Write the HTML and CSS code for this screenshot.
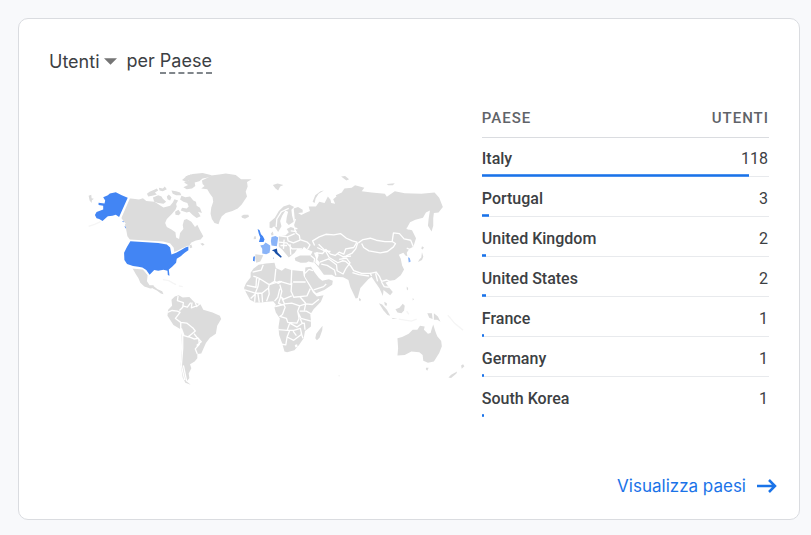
FILE: index.html
```html
<!DOCTYPE html>
<html lang="it">
<head>
<meta charset="utf-8">
<meta name="viewport" content="width=device-width, initial-scale=1">
<title>Utenti per Paese</title>
<link rel="stylesheet" href="styles.css">
</head>
<body>
<main class="card">
  <h2 class="title">
    <button class="metric" type="button">Utenti<svg class="caret" viewBox="0 0 12 6" aria-hidden="true"><path d="M0 0H12L6 6Z"/></svg></button>
    <span>per <span class="dimension">Paese</span></span>
  </h2>
  <div class="content">
    <svg class="map" viewBox="0 0 1170 675" aria-hidden="true">
      <!-- North America -->
      <g class="land">
        <path d="M146 97 160 99 178 101 190 97 200 106 225 108 240 118 252 125 272 120 280 110 285 100 296 104 290 115 292 122 288 132 277 145 262 160 257 172 262 184 276 192 288 200 290 216 299 220 302 202 312 190 310 178 314 163 322 160 336 168 343 178 347 184 354 177 362 194 372 212 364 222 350 225 336 231 328 243 308 249 296 258 281 262 280 250 270 236 250 232 152 224 143 212 139 190 133 170 124 157Z"/>
        <path d="M202 84 210 78 224 72 232 68 236 74 226 80 232 86 218 90 206 92Z"/>
        <path d="M220 95 236 88 246 92 250 99 260 108 252 114 236 112 224 108Z"/>
        <path d="M238 66 250 68 256 62 262 70 250 76 240 74Z"/>
        <path d="M262 92 268 86 276 94 272 104 264 100Z"/>
        <path d="M276 74 290 76 302 80 306 88 290 88 280 84Z"/>
        <path d="M302 101 306 90 318 94 332 92 342 104 350 108 352 120 362 126 368 142 356 138 364 152 352 157 340 148 330 138 322 140 304 134 308 126 322 128 328 122 324 112 312 108Z"/>
        <path d="M287 138 297 132 304 142 298 149 288 147Z"/>
        <path d="M363 235 370 232 376 237 370 241ZM330 240 336 237 339 246 332 248Z"/>
        <path d="M26 90 34 87 35 97 42 99 36 103 35 112 29 104Z"/>
        <path d="M308 42 322 30 334 26 344 30 334 40 320 48Z"/>
        <path d="M158 308 176 309 190 310 204 330 202 348 210 360 222 360 224 368 212 370 194 364 182 352 176 338 168 326Z"/>
        <path d="M222 362 234 372 248 378 252 387 244 385 232 376 220 370Z"/>
      </g>
      <g class="wash"><path d="M250 343 268 346 282 354 290 358M298 362 310 364M26 182 44 176 62 168"/></g>
      <!-- Greenland and the North Atlantic -->
      <g class="land" transform="translate(300)">
        <path d="M18 32 40 24 70 21 98 28 90 34 70 38 60 46 46 50 48 60 38 68 22 70 12 64 26 57 14 50 30 42Z"/>
        <path d="M68 44 88 34 96 29 120 26 140 23 170 27 186 40 218 40 204 48 206 62 200 78 204 92 196 104 188 116 176 128 160 136 140 142 128 152 122 164 118 176 106 172 98 160 94 144 96 126 102 108 100 94 92 84 84 70 66 68 76 60 70 54Z"/>
        <path d="M187 151 194 147 208 147 210 153 198 159 189 156Z"/>
        <path d="M282 57 296 53 314 57 304 62 298 74 290 68Z"/>
        <path d="M225 213 231 212 231 220 224 221Z"/>
        <path d="M229 266 253 269 250 276 244 288 232 292 229 280Z"/>
      </g>
      <!-- Eurasia -->
      <g class="land" transform="translate(480)">
        <path d="M92 186 92 170 108 156 120 136 134 122 152 116 166 124 158 132 160 150 165 168 150 178 142 170 144 154 148 138 140 134 130 150 124 166 128 182 118 199 112 190 106 182 98 188Z"/>
        <path d="M165 128 178 124 192 132 192 140 178 142 188 148 200 142 214 136 210 122 232 122 242 108 258 112 262 104 268 92 276 102 278 112 290 114 284 100 294 92 292 88 310 80 318 68 340 66 350 58 378 66 370 76 400 80 440 84 446 93 470 76 500 82 550 84 590 80 604 96 615 124 602 140 588 142 586 158 586 180 581 198 570 180 572 160 576 134 564 140 555 156 532 162 516 170 505 190 522 194 534 218 526 244 514 250 506 262 508 272 502 270 496 262 482 268 488 280 492 300 498 312 488 330 470 344 454 346 442 352 452 366 464 380 456 390 436 374 434 392 424 370 412 352 400 334 390 342 366 368 358 398 352 400 336 366 330 344 314 336 290 334 280 328 256 328 240 306 226 291 186 292 170 286 168 278 184 270 216 270 222 258 206 252 196 244 190 252 176 250 168 262 150 276 140 264 130 252 120 244 120 212 140 210 150 200 144 190 156 184 162 186 168 160Z"/>
        <path d="M222 108 230 88 246 76 256 74 240 84 231 98 228 112Z"/>
        <path d="M96 204 102 198 104 208 98 210Z"/>
        <path d="M308 32 320 30 332 40 324 44ZM446 54 470 52 464 58 450 58Z"/>
        <path d="M552 242 558 246 554 252 550 250ZM552 260 556 274 552 284 540 290 544 282 550 276Z"/>
      </g>
      <g class="water" transform="translate(480)">
        <path d="M226 262 238 260 240 270 236 282 244 292 240 302 230 292 232 278Z"/>
        <path d="M505 186 520 188 510 192Z"/>
      </g>
      <g class="borders" transform="translate(480)">
        <path d="M112 184 114 160 128 138 150 128M170 160 164 178 172 202 182 210 184 222 206 230 214 238 206 252M122 211 146 214 168 204M146 214 148 226 164 232 184 224M120 230 144 232 160 250 190 250M125 240 145 240M136 222 134 250M154 236 156 268M162 184 176 190M156 196 174 198M228 240 222 226 242 214 262 206 286 208 306 204 324 218 342 226 356 230 346 246 322 250 316 266 302 260 290 270 276 266 262 252 252 264 232 262"/>
        <path d="M360 232 374 222 396 218 414 224 440 228 462 228 466 202 484 204 498 220 518 224 526 244M370 234 376 246 392 256 426 262 448 258 466 244 472 234 462 228M358 232 352 250 340 264 322 272 312 274M236 246 262 258 272 276 298 292 312 286 322 288 336 300 346 316 370 324 396 324 400 332"/>
        <path d="M244 290 270 280 294 298 296 316 314 326 322 310 334 294M216 270 228 280 226 292M248 296 266 300 288 314 292 330M196 300 210 290 228 296 240 314M342 322 362 328 392 332M396 324 414 320 424 334 430 348 446 344 458 350M412 324 418 348M430 350 438 364 452 366M296 264 314 274 338 272M302 282 324 278 336 294M240 236 260 256 276 258"/>
        <path d="M508 264 518 260M516 252 506 248"/>
      </g>
      <!-- South America -->
      <g transform="translate(120 300)">
        <path class="land" d="M166 94 178 90 190 97 210 95 226 112 244 118 252 134 280 142 302 152 306 162 294 182 290 206 272 218 260 234 252 252 246 266 234 267 234 280 226 290 212 298 216 310 208 326 210 340 202 350 214 360 198 354 190 338 184 300 188 250 186 194 162 180 144 152 146 134 158 122 156 104Z"/>
        <path class="borders" d="M176 92 174 106 192 112 190 126 180 136M144 142 158 136 174 138 182 142 168 160 184 172 202 174 220 188 228 198 218 206 206 216 194 212 186 190M184 174 184 196 190 212 190 250 186 302 196 346M206 214 224 222 238 220 240 238 228 252 234 267M224 206 232 216 246 230 232 242M190 122 204 126 214 112M218 112 216 128 232 122M228 112 232 124 242 116M192 302 202 350"/>
      </g>
      <!-- Africa and Arabia -->
      <g transform="translate(465 270)">
        <g class="land">
          <path d="M58 40 74 28 96 24 122 22 126 38 144 46 154 38 172 44 208 48 210 62 220 80 228 94 238 112 250 124 270 120 262 140 240 162 230 178 232 196 232 214 214 228 210 250 196 270 182 286 160 292 152 290 146 268 136 240 134 216 138 190 126 172 122 158 126 148 118 138 100 140 82 142 64 142 48 134 36 112 30 98 36 84 50 66 50 52Z"/>
          <path d="M267 212 266 226 258 248 250 256 245 250 248 236 256 226Z"/>
          <path d="M215 36 232 34 242 50 256 68 266 76 286 72 298 76 296 88 272 104 248 114 240 106 228 86 214 64Z"/>
        </g>
        <path class="borders" d="M56 50 82 44 88 28M58 62 74 68 106 88 122 78 126 40M38 90 66 96 68 64M76 70 72 94 64 114 84 114 104 98 106 88 138 78 172 88 174 44M122 78 134 84 144 78M178 80 216 80M174 82 172 108 180 126 220 122 230 100M138 88 144 108 140 124 150 132 174 122M104 98 106 116 98 138M138 100 132 126 122 138M32 104 52 110 64 114M50 130 64 116 62 140M72 116 76 142M84 114 86 142M144 128 152 146 174 144 198 152 216 146 236 148 256 132M200 126 216 144M124 154 150 148 154 156 146 178 138 184 158 190 162 202 190 204 196 190 192 168 198 152M140 126 134 144 146 150M198 168 218 168 232 176M216 146 212 166M192 170 202 190 232 198M134 224 160 226 168 204 190 216 204 206 212 204 214 224M168 226 160 246 156 270 144 268M160 246 180 256 204 238 200 220 180 226 160 226M178 228 188 242M202 234 208 250M200 192 206 206"/>
        <path class="water" d="M183 270 190 268 192 276 185 278Z"/>
        <path class="borders" d="M240 104 270 94 278 86M214 54 226 42 238 46"/>
      </g>
      <!-- Southern Asia and Oceania -->
      <g class="land" transform="translate(750 300)">
        <path d="M208 220 222 216 242 206 254 194 268 194 276 182 290 184 288 194 300 206 308 204 312 190 316 178 322 198 328 214 340 228 342 244 334 264 318 290 300 294 286 288 284 270 274 262 250 260 230 270 208 272 210 250Z"/>
        <path d="M294 309 302 309 298 318 294 314Z"/>
        <path d="M400 302 406 298 410 304 402 312ZM362 338 370 330 388 320 386 326 370 340Z"/>
        <path d="M152 114 162 118 176 134 186 152 178 150 166 136Z"/>
        <path d="M202 132 214 128 224 116 230 122 228 136 220 144 208 142Z"/>
        <path d="M298 144 312 144 314 162 304 158ZM318 144 330 154 338 170 328 164 318 164Z"/>
        <path d="M168 110 176 114 176 122 170 120ZM92 98 98 102 96 108 92 106ZM236 64 240 68 240 76 236 72ZM254 98 258 102 254 106Z"/>
        <path d="M190 158 208 162 194 162Z"/>
      </g>
      <g class="wash"><path d="M962 462 1000 468 1016 462M986 438 992 448M1110 450 1130 474 1156 496M780 632 784 634"/></g>
      <!-- Countries with users -->
      <path class="halo" d="M148 96 121 158 136 176M150 225 250 231 270 236 280 248 282 264 296 258 328 243M156 306 190 309 208 328"/>
      <g class="high"><path d="M144 96 118 154 108 147 98 150 84 152 78 157 68 166 58 160 50 158 45 148 50 139 62 134 70 131 70 120 56 118 56 111 74 113 76 104 70 94 84 88 90 83 108 79 126 88ZM152 227 236 232 262 237 272 246 276 267 290 262 304 254 318 246 327 243 327 254 316 262 304 272 292 280 290 292 278 304 268 312 270 331 265 329 264 316 252 313 236 316 224 314 210 328 200 314 188 306 176 304 160 302 142 296 134 284 133 262 142 244ZM127 166 134 168 130 170ZM134 182 138 183 138 189ZM536 190 542 194 546 206 552 212 557 222 554 229 540 229 544 216 540 206ZM523 274 528 272 527 288 522 286Z"/></g>
      <g class="low"><path d="M544 240 554 238 560 231 574 240 574 250 572 262 562 266 550 264 550 250ZM578 214 590 211 598 216 596 230 594 242 578 240 576 226ZM990 275 995 278 998 288 992 291Z"/></g>
      <path class="top" d="M579 254 594 249 596 260 609 274 606 277 590 264 586 258ZM583 277 585 277 585 281Z"/>
    </svg>
    <table class="countries">
      <thead><tr><th scope="col">Paese</th><th scope="col">Utenti</th></tr></thead>
      <tbody>
        <tr><th scope="row">Italy</th><td>118<span class="bar" style="width:93%"></span></td></tr>
        <tr><th scope="row">Portugal</th><td>3<span class="bar" style="width:2.4%"></span></td></tr>
        <tr><th scope="row">United Kingdom</th><td>2<span class="bar" style="width:1.6%"></span></td></tr>
        <tr><th scope="row">United States</th><td>2<span class="bar" style="width:1.6%"></span></td></tr>
        <tr><th scope="row">France</th><td>1<span class="bar" style="width:0.8%"></span></td></tr>
        <tr><th scope="row">Germany</th><td>1<span class="bar" style="width:0.8%"></span></td></tr>
        <tr><th scope="row">South Korea</th><td>1<span class="bar" style="width:0.8%"></span></td></tr>
      </tbody>
    </table>
  </div>
  <a class="more" href="#paesi">Visualizza paesi<svg class="arrow" viewBox="0 0 20 16" aria-hidden="true"><path d="M0 8H18M12 2 18 8 12 14"/></svg></a>
</main>
</body>
</html>
```
FILE: styles.css
```css
* { box-sizing: border-box; }
body {
  margin: 0;
  padding: 18px 11px 15px 18px;
  background: #f8f9fb;
  color: #3c4043;
  font-family: Roboto, "Liberation Sans", sans-serif;
  font-size: 16px;
}
.card {
  display: flex;
  flex-direction: column;
  padding: 30px 30px 21px;
  background: #fff;
  border: 1px solid #dadce0;
  border-radius: 10px;
}
.title {
  display: flex;
  gap: 9px;
  margin: 0;
  font-family: Inter, Roboto, sans-serif;
  font-size: 18px;
  line-height: 23px;
  font-weight: 400;
}
.metric {
  display: flex;
  align-items: center;
  gap: 5px;
  padding: 0;
  border: 0;
  background: none;
  color: inherit;
  font: inherit;
}
.caret { width: 13px; height: 7px; fill: #757575; }
.dimension {
  display: inline-block;
  border-bottom: 2px dashed #80868b;
}
.content {
  display: grid;
  grid-template-columns: 3fr 2fr;
  align-items: start;
  gap: 2px;
  margin-top: 24px;
}
.map {
  display: block;
  width: 90%;
  margin: 68px 12px 0 auto;
}
.land { fill: #dcdcdc; }
.water { fill: #fff; }
.borders, .halo { fill: none; stroke: #fff; stroke-width: 4; stroke-linejoin: round; }
.halo { stroke-width: 6; }
.wash { fill: none; stroke: #f5f5f5; stroke-width: 4; }
.high { fill: #4285f4; }
.low { fill: #8ab4f8; }
.top { fill: #174ea6; }
.countries { width: 100%; border-collapse: collapse; }
.countries th, .countries td { padding: 0; text-align: left; }
.countries tr > :last-child { text-align: right; }
.countries thead tr { height: 39px; box-shadow: 0 1px #dadce0; }
.countries thead th {
  color: #5f6368;
  font-size: 15px;
  font-weight: 500;
  letter-spacing: 1px;
  text-transform: uppercase;
}
.countries tbody tr { position: relative; height: 40px; box-shadow: inset 0 -1px #e8eaed; }
.countries tbody tr:last-child { box-shadow: none; }
.countries tbody th, .countries tbody td { padding: 2px 1px 0 0; }
.countries tbody th { font-weight: 500; }
.bar {
  position: absolute;
  left: 0;
  bottom: 0;
  height: 3px;
  background: #1a73e8;
  border: solid #4a90ee;
  border-width: 1px 0;
}
.more {
  display: flex;
  align-items: center;
  align-self: flex-end;
  gap: 11px;
  margin: 57px -8px 0 0;
  color: #1a73e8;
  font-family: Inter, Roboto, sans-serif;
  font-size: 17px;
  line-height: 24px;
  text-decoration: none;
}
.arrow { width: 20px; height: 16px; fill: none; stroke: currentColor; stroke-width: 2.5; }
```
